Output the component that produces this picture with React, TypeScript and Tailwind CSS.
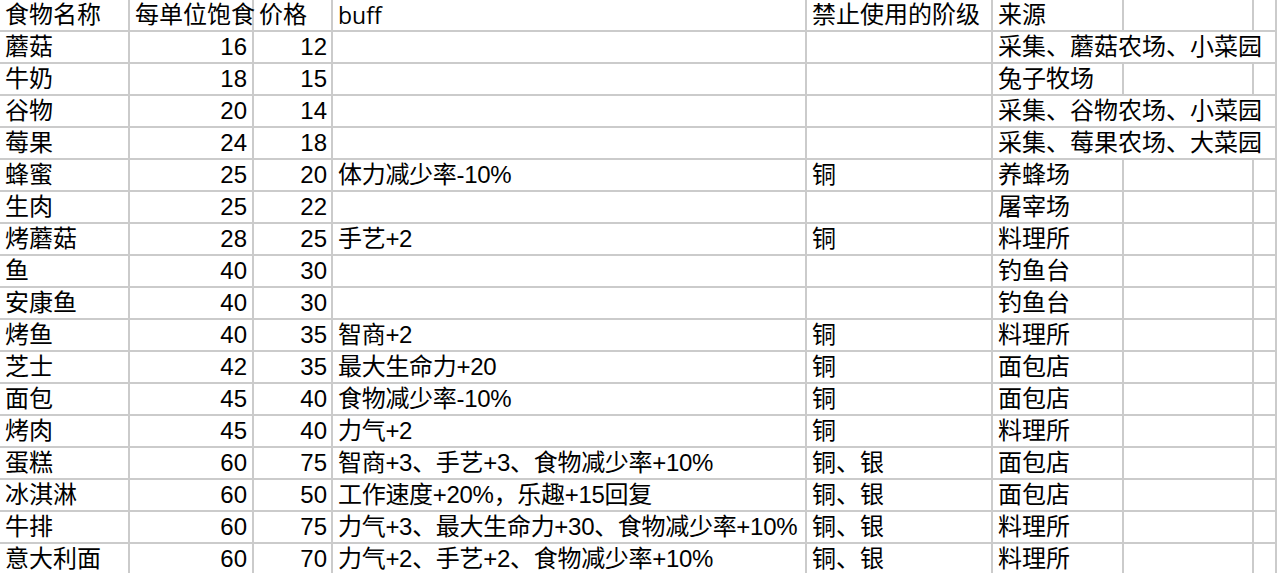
import React from 'react';

interface Food {
  name: string;
  satiety: number;
  price: number;
  buff: string;
  tier: string;
  source: string;
}

const foods: Food[] = [
  { name: '蘑菇', satiety: 16, price: 12, buff: '', tier: '', source: '采集、蘑菇农场、小菜园' },
  { name: '牛奶', satiety: 18, price: 15, buff: '', tier: '', source: '兔子牧场' },
  { name: '谷物', satiety: 20, price: 14, buff: '', tier: '', source: '采集、谷物农场、小菜园' },
  { name: '莓果', satiety: 24, price: 18, buff: '', tier: '', source: '采集、莓果农场、大菜园' },
  { name: '蜂蜜', satiety: 25, price: 20, buff: '体力减少率-10%', tier: '铜', source: '养蜂场' },
  { name: '生肉', satiety: 25, price: 22, buff: '', tier: '', source: '屠宰场' },
  { name: '烤蘑菇', satiety: 28, price: 25, buff: '手艺+2', tier: '铜', source: '料理所' },
  { name: '鱼', satiety: 40, price: 30, buff: '', tier: '', source: '钓鱼台' },
  { name: '安康鱼', satiety: 40, price: 30, buff: '', tier: '', source: '钓鱼台' },
  { name: '烤鱼', satiety: 40, price: 35, buff: '智商+2', tier: '铜', source: '料理所' },
  { name: '芝士', satiety: 42, price: 35, buff: '最大生命力+20', tier: '铜', source: '面包店' },
  { name: '面包', satiety: 45, price: 40, buff: '食物减少率-10%', tier: '铜', source: '面包店' },
  { name: '烤肉', satiety: 45, price: 40, buff: '力气+2', tier: '铜', source: '料理所' },
  { name: '蛋糕', satiety: 60, price: 75, buff: '智商+3、手艺+3、食物减少率+10%', tier: '铜、银', source: '面包店' },
  { name: '冰淇淋', satiety: 60, price: 50, buff: '工作速度+20%，乐趣+15回复', tier: '铜、银', source: '面包店' },
  { name: '牛排', satiety: 60, price: 75, buff: '力气+3、最大生命力+30、食物减少率+10%', tier: '铜、银', source: '料理所' },
  { name: '意大利面', satiety: 60, price: 70, buff: '力气+2、手艺+2、食物减少率+10%', tier: '铜、银', source: '料理所' },
];

const cell =
  'h-[32px] border-r-2 border-b-2 border-[#cbcbcb] flex items-center whitespace-nowrap overflow-visible pl-[5px] leading-none';

export default function App() {
  return (
    <div
      className="w-full min-h-screen bg-white text-black text-[24px] overflow-hidden"
      style={{ fontFamily: '"Liberation Sans", "Noto Sans CJK SC", sans-serif' }}
    >
      <div className="grid grid-cols-[130px_124px_79px_474px_186px_131px_130px_1fr]">
        {/* 表头 */}
        <div className={`${cell} h-[31px]`}>食物名称</div>
        <div className={`${cell} h-[31px]`}>每单位饱食</div>
        <div className={`${cell} h-[31px]`}>价格</div>
        <div className={`${cell} h-[31px] text-[23px]`} style={{ fontFamily: '"Open Sans", sans-serif' }}>
          buff
        </div>
        <div className={`${cell} h-[31px]`}>禁止使用的阶级</div>
        <div className={`${cell} h-[31px]`}>来源</div>
        <div className={`${cell} h-[31px]`}></div>
        <div className={`${cell} h-[31px]`}></div>

        {foods.map((f) => {
          const long = f.source.length > 6;
          return (
            <React.Fragment key={f.name}>
              <div className={cell}>{f.name}</div>
              <div className={`${cell} justify-end pr-[5px]`}>{f.satiety}</div>
              <div className={`${cell} justify-end pr-[4px]`}>{f.price}</div>
              <div className={`${cell} tracking-[-0.3px]`}>{f.buff}</div>
              <div className={cell}>{f.tier}</div>
              {long ? (
                <div className={`${cell} col-span-3`}>{f.source}</div>
              ) : (
                <>
                  <div className={cell}>{f.source}</div>
                  <div className={cell}></div>
                  <div className={cell}></div>
                </>
              )}
            </React.Fragment>
          );
        })}
      </div>
    </div>
  );
}
